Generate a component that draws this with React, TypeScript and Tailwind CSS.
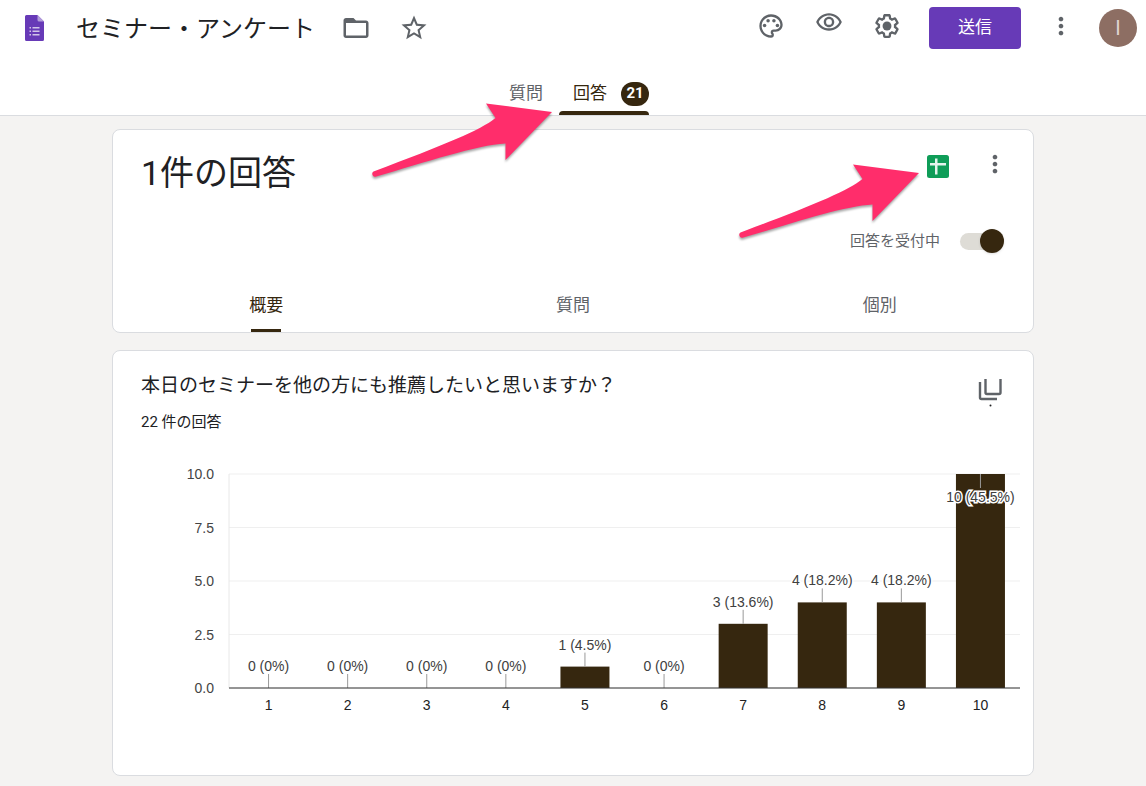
import { useState } from "react";
import { MdFolderOpen, MdMoreVert, MdStarBorder } from "react-icons/md";

interface Answer {
  score: number;
  count: number;
  percent: string;
}

const answers: Answer[] = [
  { score: 1, count: 0, percent: "0%" },
  { score: 2, count: 0, percent: "0%" },
  { score: 3, count: 0, percent: "0%" },
  { score: 4, count: 0, percent: "0%" },
  { score: 5, count: 1, percent: "4.5%" },
  { score: 6, count: 0, percent: "0%" },
  { score: 7, count: 3, percent: "13.6%" },
  { score: 8, count: 4, percent: "18.2%" },
  { score: 9, count: 4, percent: "18.2%" },
  { score: 10, count: 10, percent: "45.5%" },
];

const ticks = [10, 7.5, 5, 2.5, 0];

const responseTabs = ["概要", "質問", "個別"];

function FormsLogo() {
  return (
    <svg viewBox="0 0 19 26" className="w-[19px] h-[26px]" aria-hidden="true">
      <path
        d="M1.5 0H12.5L19 6.5V24.5A1.5 1.5 0 0 1 17.5 26H1.5A1.5 1.5 0 0 1 0 24.5V1.5A1.5 1.5 0 0 1 1.5 0Z"
        fill="#673ab7"
      />
      <path d="M12.5 0L19 6.5H14A1.5 1.5 0 0 1 12.5 5Z" fill="#b39ddb" />
      <path
        d="M4.5 12H6V13.5H4.5ZM7.5 12H14.5V13.5H7.5ZM4.5 15.5H6V17H4.5ZM7.5 15.5H14.5V17H7.5ZM4.5 19H6V20.5H4.5ZM7.5 19H14.5V20.5H7.5Z"
        fill="#d1c4e9"
      />
    </svg>
  );
}

function PaletteIcon() {
  return (
    <svg viewBox="0 0 24 24" className="size-7" fill="currentColor">
      <path d="M12 22C6.49 22 2 17.51 2 12S6.49 2 12 2s10 4.04 10 9c0 3.31-2.69 6-6 6h-1.77c-.28 0-.5.22-.5.5 0 .12.05.23.13.33.41.47.64 1.06.64 1.67A2.5 2.5 0 0 1 12 22zm0-18c-4.41 0-8 3.59-8 8s3.59 8 8 8c.28 0 .5-.22.5-.5a.54.54 0 0 0-.14-.35c-.41-.46-.63-1.05-.63-1.65a2.5 2.5 0 0 1 2.5-2.5H16c2.21 0 4-1.79 4-4 0-3.86-3.59-7-8-7z" />
      <circle cx="6.5" cy="11.5" r="1.5" />
      <circle cx="9.5" cy="7.5" r="1.5" />
      <circle cx="14.5" cy="7.5" r="1.5" />
      <circle cx="17.5" cy="11.5" r="1.5" />
    </svg>
  );
}

function PreviewIcon() {
  return (
    <svg viewBox="0 3 24 24" className="size-7" fill="currentColor">
      <path d="M12 6c3.79 0 7.17 2.13 8.82 5.5C19.17 14.87 15.79 17 12 17s-7.17-2.13-8.82-5.5C4.83 8.13 8.21 6 12 6m0-2C7 4 2.73 7.11 1 11.5 2.73 15.89 7 19 12 19s9.27-3.11 11-7.5C21.27 7.11 17 4 12 4zm0 5a2.5 2.5 0 0 1 0 5 2.5 2.5 0 0 1 0-5m0-2c-2.48 0-4.5 2.02-4.5 4.5S9.52 16 12 16s4.5-2.02 4.5-4.5S14.48 7 12 7z" />
    </svg>
  );
}

function SettingsIcon() {
  return (
    <svg viewBox="0 0 24 24" className="size-7" fill="currentColor">
      <path d="M13.85 22.25h-3.7c-.74 0-1.36-.54-1.45-1.27l-.27-1.89c-.27-.14-.53-.29-.79-.46l-1.8.72c-.7.26-1.47-.03-1.81-.65L2.2 15.53c-.35-.66-.2-1.44.36-1.88l1.53-1.19c-.01-.15-.02-.3-.02-.46 0-.15.01-.31.02-.46l-1.52-1.19c-.59-.45-.74-1.26-.37-1.88l1.85-3.19c.34-.62 1.11-.9 1.79-.63l1.81.73c.26-.17.52-.32.78-.46l.27-1.91c.09-.7.71-1.25 1.44-1.25h3.7c.74 0 1.36.54 1.45 1.27l.27 1.89c.27.14.53.29.79.46l1.8-.72c.71-.26 1.48.03 1.82.65l1.84 3.18c.36.66.2 1.44-.36 1.88l-1.52 1.19c.01.15.02.3.02.46s-.01.31-.02.46l1.52 1.19c.56.45.72 1.23.37 1.86l-1.86 3.22c-.34.62-1.11.9-1.8.63l-1.8-.72c-.26.17-.52.32-.78.46l-.27 1.91c-.1.68-.72 1.22-1.46 1.22zm-3.23-2h2.76l.37-2.55.53-.22c.44-.18.88-.44 1.34-.78l.45-.34 2.38.96 1.38-2.4-2.03-1.58.07-.56c.03-.26.06-.51.06-.78s-.03-.53-.06-.78l-.07-.56 2.03-1.58-1.39-2.4-2.39.96-.45-.35c-.42-.32-.87-.58-1.33-.77l-.52-.22-.37-2.55h-2.76l-.37 2.55-.53.21c-.44.19-.88.44-1.34.79l-.45.33-2.38-.95-1.39 2.39 2.03 1.58-.07.56a7 7 0 0 0-.06.79c0 .26.02.53.06.78l.07.56-2.03 1.58 1.38 2.4 2.39-.96.45.35c.43.33.86.58 1.33.77l.53.22.38 2.55z" />
      <circle cx="12" cy="12" r="3.8" />
    </svg>
  );
}

function SheetsIcon() {
  return (
    <svg viewBox="0 0 22 23" className="w-[22px] h-[23px]" aria-hidden="true">
      <rect width="22" height="23" rx="2.5" fill="#0f9d58" />
      <path d="M8 3.5H10.5V8H19V10.5H10.5V19.5H8V10.5H3V8H8Z" fill="#e3f4ec" />
    </svg>
  );
}

function CopyIcon() {
  return (
    <svg viewBox="0 0 26 30" className="w-[26px] h-[30px]" aria-hidden="true">
      <path
        d="M8.5 2V15.5A1.5 1.5 0 0 0 10 17H22A1.5 1.5 0 0 0 23.5 15.5V2M3 5V20.5A1.5 1.5 0 0 0 4.5 22H20"
        fill="none"
        stroke="#5f6368"
        strokeWidth="2.4"
      />
      <circle cx="13.5" cy="28.5" r="1" fill="#202124" />
    </svg>
  );
}

function PointerArrow({ className }: { className: string }) {
  return (
    <svg
      viewBox="0 0 186 84"
      className={`absolute z-10 w-[186px] h-[84px] max-w-none pointer-events-none drop-shadow-[0_2px_1px_rgba(0,0,0,0.35)] ${className}`}
      aria-hidden="true"
    >
      <path
        d="M182 12L116 3.5L125.5 18C111 30 74 45 3.5 71.5C1 73 2.5 77.5 5.5 76.8C56 62 107 45 135.5 43.5L135.5 60Z"
        fill="#ff2d6b"
      />
    </svg>
  );
}

function ScoreChart() {
  const left = 116;
  const right = 907;
  const baseline = 255;
  const unit = 21.4;
  const step = (right - left) / answers.length;

  return (
    <svg
      viewBox="0 0 920 342"
      className="block w-full font-['Liberation_Sans',Arial,sans-serif] text-sm"
      role="img"
      aria-label="回答の分布"
    >
      {ticks.map((tick) => {
        const y = baseline - tick * unit;
        return (
          <g key={tick}>
            <line x1={left} x2={right} y1={y} y2={y} stroke="#efefef" />
            <text x="101" y={y + 5} textAnchor="end" fill="#444444">
              {tick.toFixed(1)}
            </text>
          </g>
        );
      })}
      <line x1={left} x2={left} y1="41" y2={baseline} stroke="#e8e8e8" />

      {answers.map((answer, i) => {
        const x = left + step * (i + 0.5);
        const top = baseline - answer.count * unit;
        const inside = answer.count === 10;
        return (
          <g key={answer.score}>
            <rect
              x={x - 24.5}
              y={top}
              width="49"
              height={answer.count * unit}
              fill="#36270f"
            />
            <line
              x1={x}
              x2={x}
              y1={top}
              y2={inside ? top + 14 : top - 14}
              stroke="#999999"
            />
            <text
              x={x}
              y={inside ? top + 28 : top - 17}
              textAnchor="middle"
              fill="#404040"
              stroke="#ffffff"
              strokeWidth="3"
              paintOrder="stroke"
            >
              {answer.count} ({answer.percent})
            </text>
            <text x={x} y="277" textAnchor="middle" fill="#222222">
              {answer.score}
            </text>
          </g>
        );
      })}
      <line
        x1={left}
        x2={right}
        y1={baseline}
        y2={baseline}
        stroke="#333333"
      />
    </svg>
  );
}

export default function App() {
  const [accepting, setAccepting] = useState(true);
  const [activeTab, setActiveTab] = useState("概要");

  return (
    <div className="min-h-screen bg-[#f4f3f2] text-[#202124] font-['Roboto','Noto_Sans_CJK_JP',sans-serif]">
      <header className="bg-white border-b border-[#dadce0]">
        <div className="h-14 pl-[25px] pr-[9px] flex items-center justify-between">
          <div className="flex items-center text-[#5f6368]">
            <FormsLogo />
            <h1 className="ml-8 pt-0.5 text-2xl text-[#202124]">
              セミナー・アンケート
            </h1>
            <button aria-label="フォルダに移動" className="ml-[26px]">
              <MdFolderOpen className="size-[30px]" />
            </button>
            <button aria-label="スターを付ける" className="ml-7">
              <MdStarBorder className="size-[30px]" />
            </button>
          </div>

          <div className="flex items-center text-[#5f6368]">
            <div className="flex items-center gap-[30px] pb-1">
              <button aria-label="テーマをカスタマイズ">
                <PaletteIcon />
              </button>
              <button aria-label="プレビュー">
                <PreviewIcon />
              </button>
              <button aria-label="設定">
                <SettingsIcon />
              </button>
            </div>
            <button className="ml-7 w-[92px] h-[42px] rounded bg-[#673ab7] text-white text-[17px]">
              送信
            </button>
            <button aria-label="その他" className="ml-[26px] pb-1">
              <MdMoreVert className="size-7" />
            </button>
            <button
              aria-label="アカウント"
              className="ml-6 size-[38px] rounded-full bg-[#8d6e63] text-[#e0d5d1] text-xl"
            >
              I
            </button>
          </div>
        </div>

        <nav className="mt-4 flex justify-center gap-1 text-[17px]">
          <button className="h-[43px] px-3 text-[#5f6368]">質問</button>
          <div className="relative">
            <button className="h-[43px] pl-[14px] flex items-center gap-[14px] text-[#36270f]">
              回答
              <span className="w-7 h-6 rounded-full bg-[#36270f] text-white text-[15px] font-bold flex items-center justify-center">
                21
              </span>
            </button>
            <span className="absolute inset-x-0 bottom-0 h-1 rounded-t bg-[#36270f]" />
            <PointerArrow className="-left-[189px] top-7" />
          </div>
        </nav>
      </header>

      <main className="max-w-[922px] mx-auto pt-[13px] pb-[10px] flex flex-col gap-[17px]">
        <section className="bg-white border border-[#dadce0] rounded-lg">
          <div className="pl-7 pr-6 flex justify-between">
            <h2 className="pt-5 text-[34px] leading-[46px]">1件の回答</h2>
            <div className="pt-5 flex flex-col items-end">
              <div className="flex items-center gap-8">
                <div className="relative pt-1">
                  <button
                    aria-label="スプレッドシートで表示"
                    className="block"
                  >
                    <SheetsIcon />
                  </button>
                  <PointerArrow className="-left-[190px] top-[10px]" />
                </div>
                <button aria-label="その他のオプション">
                  <MdMoreVert className="size-7" color="#5f6368" />
                </button>
              </div>
              <label className="mt-[51px] mr-[5px] flex items-center gap-5 text-[15px] leading-6 text-[#5f6368]">
                回答を受付中
                <input
                  type="checkbox"
                  role="switch"
                  checked={accepting}
                  onChange={(e) => setAccepting(e.target.checked)}
                  className="appearance-none relative w-[44px] h-[17px] rounded-full bg-[#dedcd6] before:absolute before:-top-1 before:left-0 checked:before:left-5 before:size-6 before:rounded-full before:bg-[#36270f] before:shadow"
                />
              </label>
            </div>
          </div>

          <div role="tablist" className="mt-6 grid grid-cols-3 text-[17px]">
            {responseTabs.map((tab) => (
              <button
                key={tab}
                role="tab"
                aria-selected={activeTab === tab}
                onClick={() => setActiveTab(tab)}
                className="h-[55px] flex flex-col items-center justify-between"
              >
                <span
                  className={`pt-4 leading-6 ${
                    activeTab === tab ? "text-[#36270f]" : "text-[#5f6368]"
                  }`}
                >
                  {tab}
                </span>
                {activeTab === tab && (
                  <span className="w-[30px] h-[3px] bg-[#36270f]" />
                )}
              </button>
            ))}
          </div>
        </section>

        <section className="bg-white border border-[#dadce0] rounded-lg">
          <div className="pt-5 pl-7 pr-[30px] flex justify-between">
            <div>
              <h3 className="pt-px text-[19px] leading-7">
                本日のセミナーを他の方にも推薦したいと思いますか？
              </h3>
              <p className="mt-[11px] text-[15px] leading-[22px]">
                22 件の回答
              </p>
            </div>
            <button aria-label="グラフをコピー" className="self-start pt-[6px]">
              <CopyIcon />
            </button>
          </div>
          <ScoreChart />
        </section>
      </main>
    </div>
  );
}
